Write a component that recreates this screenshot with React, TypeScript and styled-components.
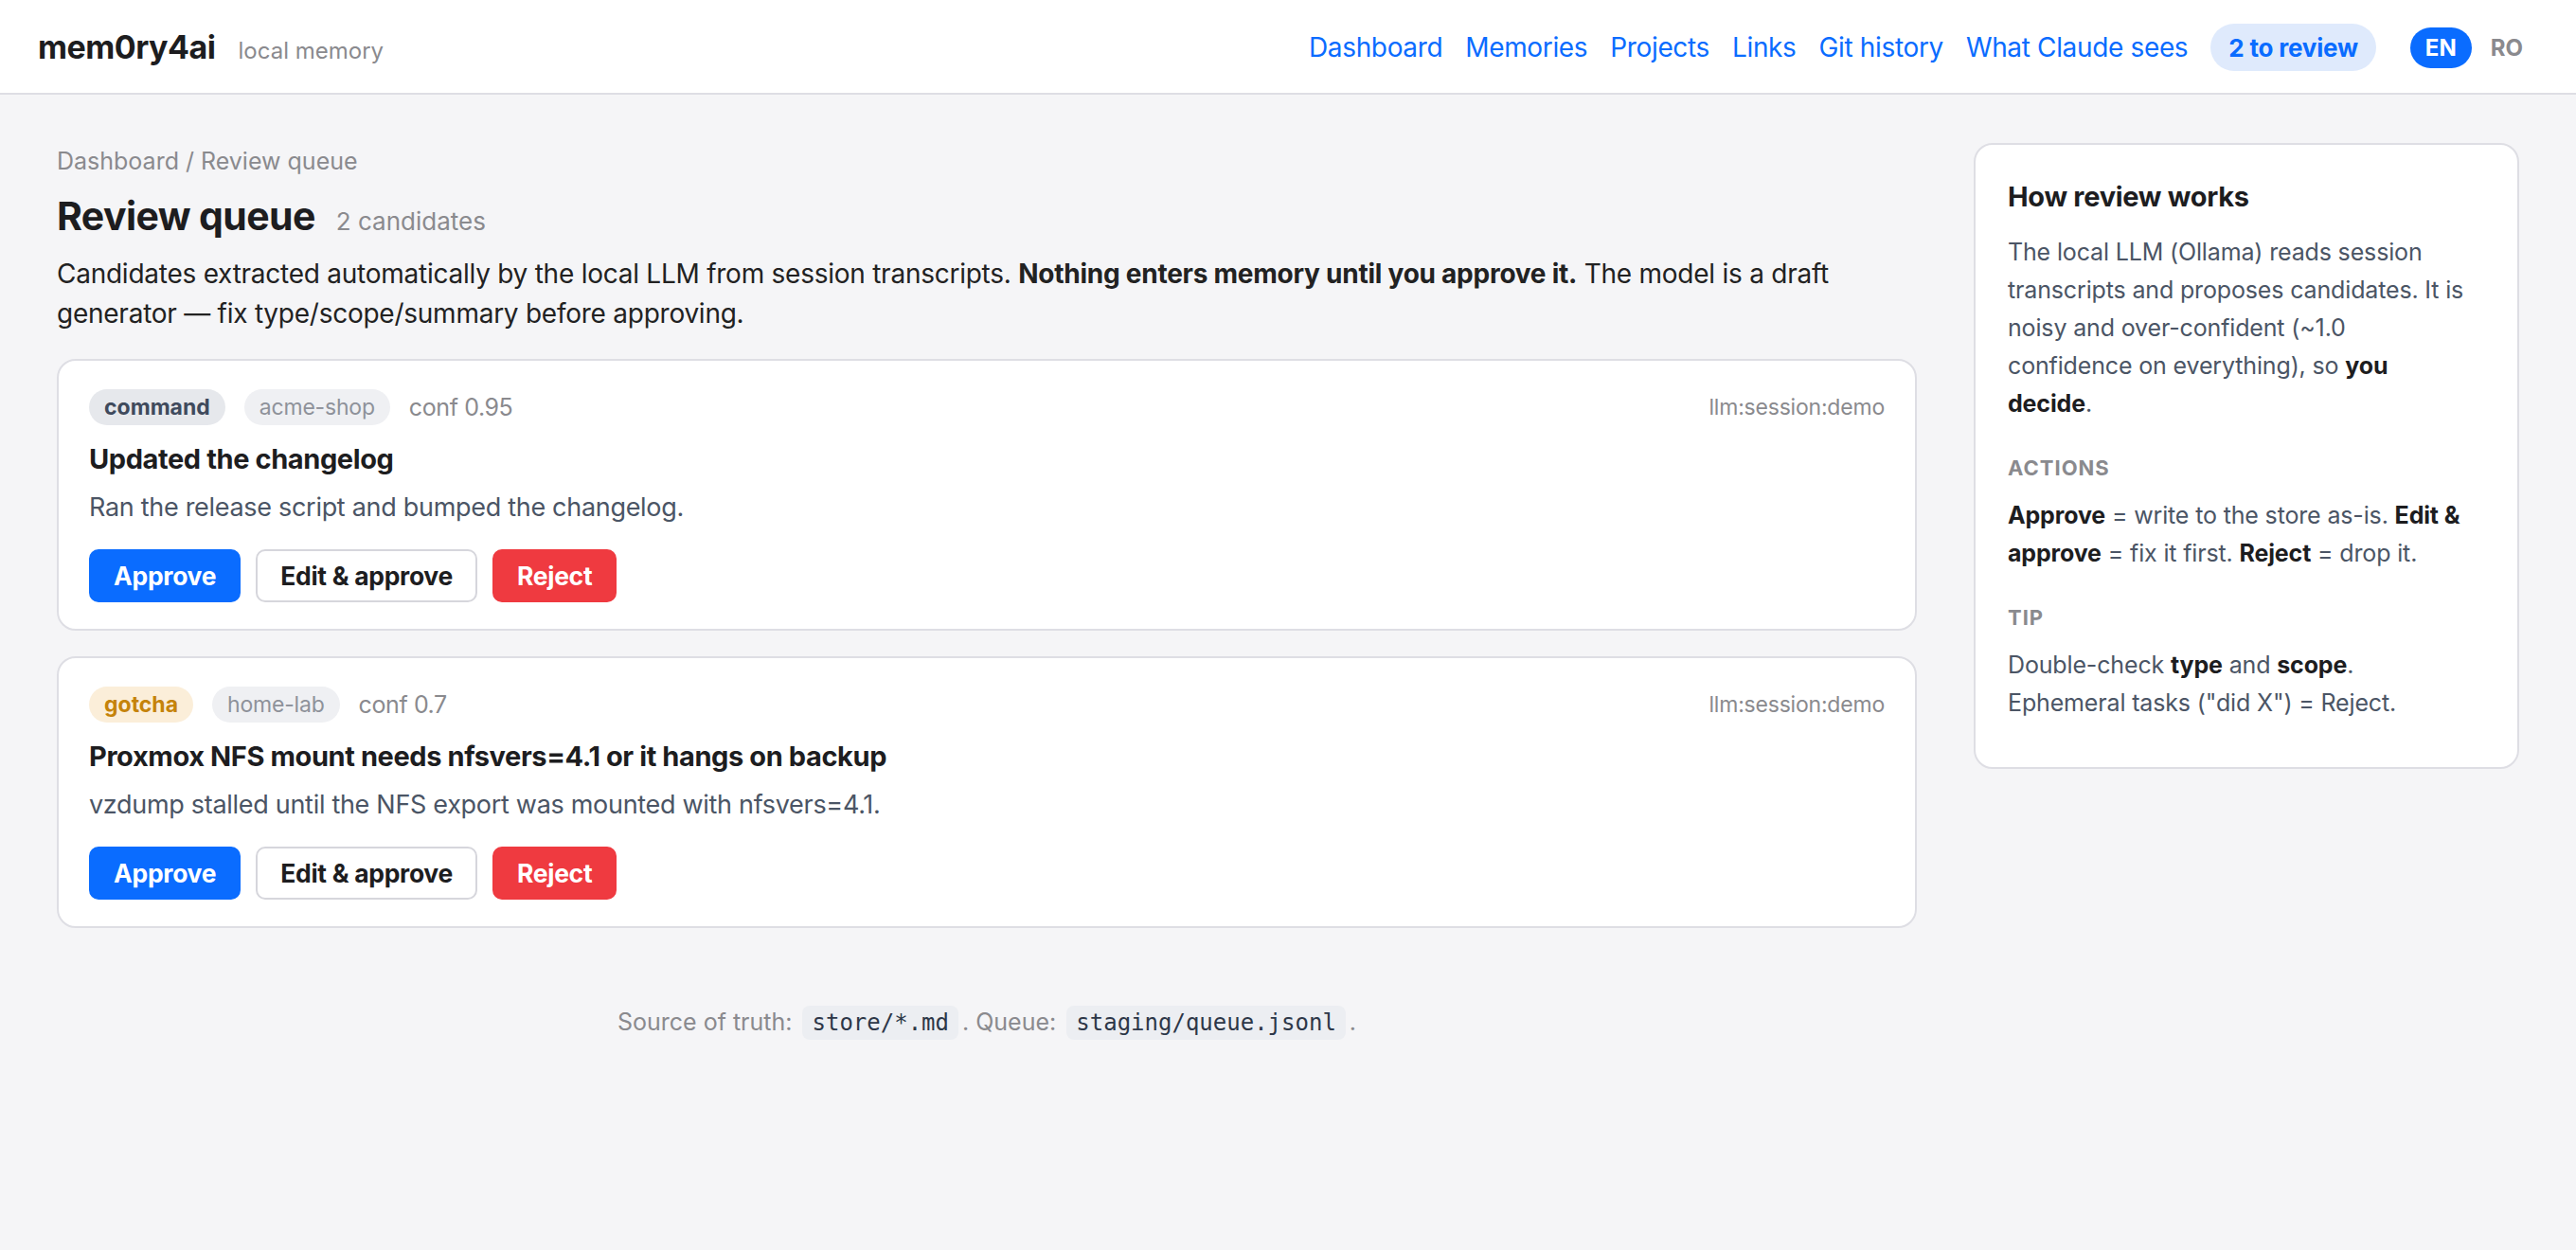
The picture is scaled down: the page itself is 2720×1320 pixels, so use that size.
import { FC } from "react";
import styled, { createGlobalStyle } from "styled-components";

const GlobalStyle = createGlobalStyle`
  html, body, #root {
    margin: 0;
    min-height: 100%;
    background: #f5f5f7;
  }
  body {
    font-family: Inter, "Noto Sans", "Liberation Sans", sans-serif;
    color: #222;
    -webkit-font-smoothing: antialiased;
  }
  * { box-sizing: border-box; }
`;

interface Candidate {
  id: string;
  type: "command" | "gotcha";
  scope: string;
  conf: string;
  source: string;
  title: string;
  summary: string;
}

const candidates: Candidate[] = [
  {
    id: "c1",
    type: "command",
    scope: "acme-shop",
    conf: "0.95",
    source: "llm:session:demo",
    title: "Updated the changelog",
    summary: "Ran the release script and bumped the changelog.",
  },
  {
    id: "c2",
    type: "gotcha",
    scope: "home-lab",
    conf: "0.7",
    source: "llm:session:demo",
    title: "Proxmox NFS mount needs nfsvers=4.1 or it hangs on backup",
    summary: "vzdump stalled until the NFS export was mounted with nfsvers=4.1.",
  },
];

const navLinks = ["Dashboard", "Memories", "Projects", "Links", "Git history", "What Claude sees"];

const CandidateCard: FC<{ item: Candidate }> = ({ item }) => (
  <Card>
    <MetaRow>
      <TypeTag kind={item.type}>{item.type}</TypeTag>
      <ScopeTag>{item.scope}</ScopeTag>
      <Conf>conf {item.conf}</Conf>
      <Source>{item.source}</Source>
    </MetaRow>
    <CardTitle>{item.title}</CardTitle>
    <Summary>{item.summary}</Summary>
    <Actions>
      <Button variant="primary">Approve</Button>
      <Button variant="outline">Edit &amp; approve</Button>
      <Button variant="danger">Reject</Button>
    </Actions>
  </Card>
);

const App: FC = () => {
  return (
    <>
      <GlobalStyle />
      <Header>
        <Brand>
          <Logo>mem0ry4ai</Logo>
          <Tagline>local memory</Tagline>
        </Brand>
        <Nav>
          {navLinks.map((link) => (
            <NavLink key={link}>{link}</NavLink>
          ))}
          <ReviewPill>2 to review</ReviewPill>
          <LangSwitch>
            <Lang active>EN</Lang>
            <Lang>RO</Lang>
          </LangSwitch>
        </Nav>
      </Header>

      <Page>
        <Main>
          <Breadcrumb>Dashboard / Review queue</Breadcrumb>
          <TitleRow>
            <PageTitle>Review queue</PageTitle>
            <Count>2 candidates</Count>
          </TitleRow>
          <Lead>
            Candidates extracted automatically by the local LLM from session transcripts.{" "}
            <b>Nothing enters memory until you approve it.</b> The model is a draft generator — fix
            type/scope/summary before approving.
          </Lead>
          <List>
            {candidates.map((item) => (
              <CandidateCard key={item.id} item={item} />
            ))}
          </List>
          <Footer>
            Source of truth: <Code>store/*.md</Code>. Queue: <Code>staging/queue.jsonl</Code>.
          </Footer>
        </Main>

        <Aside>
          <AsideTitle>How review works</AsideTitle>
          <AsideText>
            The local LLM (Ollama) reads session transcripts and proposes candidates. It is noisy and
            over-confident (~1.0
            <br />
            confidence on everything), so <b>you</b>
            <br />
            <b>decide</b>.
          </AsideText>
          <AsideLabel>Actions</AsideLabel>
          <AsideText>
            <b>Approve</b> = write to the store as-is. <b>Edit &amp; approve</b> = fix it first.{" "}
            <b>Reject</b> = drop it.
          </AsideText>
          <AsideLabel>Tip</AsideLabel>
          <AsideText>
            Double-check <b>type</b> and <b>scope</b>.
            <br />
            Ephemeral tasks ("did X") = Reject.
          </AsideText>
        </Aside>
      </Page>
    </>
  );
};

const Header = styled.header`
  height: 100px;
  padding: 0 40px;
  display: flex;
  align-items: center;
  justify-content: space-between;
  background: #fff;
  border-bottom: 2px solid #dedee4;
`;

const Brand = styled.div`
  display: flex;
  align-items: baseline;
  gap: 24px;
`;

const Logo = styled.span`
  font-size: 34px;
  font-weight: 700;
  letter-spacing: -0.5px;
  color: #1d1d1f;
`;

const Tagline = styled.span`
  font-size: 24px;
  color: #8a8a8e;
`;

const Nav = styled.nav`
  display: flex;
  align-items: center;
  gap: 24px;
  padding-top: 2px;
`;

const NavLink = styled.a`
  font-size: 28px;
  letter-spacing: -0.35px;
  color: #0a6cff;
  text-decoration: none;
  cursor: pointer;
`;

const ReviewPill = styled.span`
  height: 50px;
  padding: 0 19px;
  display: inline-flex;
  align-items: center;
  border-radius: 25px;
  background: #dfeafc;
  color: #0a6cff;
  font-size: 26px;
  font-weight: 700;
  letter-spacing: -0.2px;
`;

const LangSwitch = styled.div`
  display: flex;
  align-items: center;
  gap: 4px;
  margin-left: 12px;
`;

const Lang = styled.span<{ active?: boolean }>`
  height: 43px;
  padding: 0 16px;
  display: inline-flex;
  align-items: center;
  border-radius: 22px;
  font-size: 24px;
  font-weight: 700;
  background: ${(p) => (p.active ? "#0a6cff" : "transparent")};
  color: ${(p) => (p.active ? "#fff" : "#8a8a8e")};
`;

const Page = styled.div`
  max-width: 2600px;
  margin: 0 auto;
  padding-top: 51px;
  display: grid;
  grid-template-columns: 1fr 576px;
  gap: 60px;
  align-items: start;
`;

const Main = styled.main`
  min-width: 0;
`;

const Breadcrumb = styled.div`
  font-size: 25px;
  line-height: 38px;
  color: #8a8a8e;
`;

const TitleRow = styled.div`
  margin-top: 11px;
  display: flex;
  align-items: baseline;
  gap: 22px;
`;

const PageTitle = styled.h1`
  margin: 0;
  font-size: 41px;
  line-height: 56px;
  font-weight: 700;
  letter-spacing: -0.6px;
  color: #1d1d1f;
`;

const Count = styled.span`
  font-size: 26px;
  color: #8a8a8e;
`;

const Lead = styled.p`
  margin: 12px 0 27px;
  font-size: 28px;
  line-height: 42px;
  letter-spacing: -0.25px;
  color: #222;

  b {
    font-weight: 700;
  }
`;

const List = styled.div`
  display: flex;
  flex-direction: column;
  gap: 27px;
`;

const Card = styled.section`
  background: #fff;
  border: 2px solid #dedee4;
  border-radius: 20px;
  padding: 30px 32px 28px;
`;

const MetaRow = styled.div`
  display: flex;
  align-items: center;
  gap: 20px;
  height: 38px;
`;

const Tag = styled.span`
  height: 38px;
  padding: 0 16px;
  display: inline-flex;
  align-items: center;
  border-radius: 19px;
  font-size: 23px;
`;

const TypeTag = styled(Tag)<{ kind: "command" | "gotcha" }>`
  font-weight: 700;
  background: ${(p) => (p.kind === "gotcha" ? "#fbeed9" : "#e6e8ec")};
  color: ${(p) => (p.kind === "gotcha" ? "#c5830a" : "#3f4a5c")};
`;

const ScopeTag = styled(Tag)`
  background: #eff0f3;
  color: #8e929a;
  letter-spacing: -0.2px;
`;

const Conf = styled.span`
  font-size: 25px;
  letter-spacing: -0.4px;
  color: #8a8a8e;
`;

const Source = styled.span`
  margin-left: auto;
  font-size: 23px;
  letter-spacing: -0.2px;
  color: #8a8a8e;
`;

const CardTitle = styled.h2`
  margin: 14px 0 0;
  font-size: 29px;
  line-height: 44px;
  font-weight: 700;
  letter-spacing: -0.4px;
  color: #1d1d1f;
`;

const Summary = styled.p`
  margin: 9px 0 0;
  font-size: 27px;
  line-height: 40px;
  letter-spacing: -0.3px;
  color: #4b5565;
`;

const Actions = styled.div`
  margin-top: 24px;
  display: flex;
  gap: 16px;
`;

const buttonColors = {
  primary: { bg: "#0a6cff", fg: "#fff", border: "#0a6cff" },
  outline: { bg: "#fff", fg: "#1d1d1f", border: "#d6d6dc" },
  danger: { bg: "#ef3a40", fg: "#fff", border: "#ef3a40" },
};

const Button = styled.button<{ variant: keyof typeof buttonColors }>`
  height: 56px;
  padding: 0 24px;
  border-radius: 10px;
  border: 2px solid ${(p) => buttonColors[p.variant].border};
  background: ${(p) => buttonColors[p.variant].bg};
  color: ${(p) => buttonColors[p.variant].fg};
  font-family: inherit;
  font-size: 26.5px;
  font-weight: 700;
  letter-spacing: -0.3px;
  cursor: pointer;
`;

const Footer = styled.div`
  margin-top: 79px;
  text-align: center;
  font-size: 25px;
  line-height: 40px;
  color: #8a8a8e;
`;

const Code = styled.code`
  margin: 0 4px;
  padding: 4px 10px;
  border-radius: 8px;
  background: #eceef2;
  color: #2d3748;
  font-family: "DejaVu Sans Mono", "Liberation Mono", monospace;
  font-size: 24px;
`;

const Aside = styled.aside`
  background: #fff;
  border: 2px solid #dedee4;
  border-radius: 20px;
  padding: 33px 34px 36px;
`;

const AsideTitle = styled.h3`
  margin: 0 0 16px;
  font-size: 29px;
  line-height: 44px;
  font-weight: 700;
  letter-spacing: -0.3px;
  color: #1d1d1f;
`;

const AsideText = styled.p`
  margin: 0 0 12px;
  font-size: 25px;
  line-height: 40px;
  letter-spacing: -0.15px;
  color: #4b5565;

  b {
    font-weight: 700;
    color: #1d1d1f;
  }
`;

const AsideLabel = styled.div`
  margin: 32px 0 14px;
  font-size: 22px;
  line-height: 32px;
  font-weight: 700;
  letter-spacing: 1px;
  text-transform: uppercase;
  color: #8a8a8e;
`;

export default App;
